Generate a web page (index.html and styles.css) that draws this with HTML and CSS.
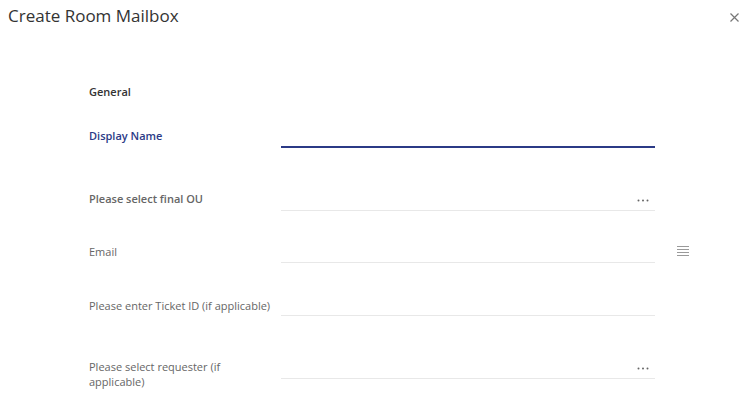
FILE: index.html
```html
<!DOCTYPE html>
<html lang="en">
<head>
    <meta charset="UTF-8">
    <title>Create Room Mailbox</title>
    <link rel="stylesheet" href="styles.css">
</head>
<body>
    <div class="dialog">
        <!-- header -->
        <div class="dialog-header">
            <h1 class="dialog-title">Create Room Mailbox</h1>
            <svg class="close-btn" width="9" height="9" viewBox="0 0 9 9">
                <path d="M0.5 0.5l8 8M8.5 0.5l-8 8" stroke="#777" stroke-width="1.2"/>
            </svg>
        </div>

        <div class="form">
            <div class="section-title">General</div>

            <div class="form-row row-active">
                <label class="form-label label-active">Display Name</label>
                <div class="field field-active"></div>
            </div>

            <div class="form-row row-ou">
                <label class="form-label label-bold">Please select final OU</label>
                <div class="field">
                    <svg class="more" width="12" height="3" viewBox="0 0 12 3">
                        <circle cx="1.5" cy="1.5" r="1" fill="#666"/>
                        <circle cx="6" cy="1.5" r="1" fill="#666"/>
                        <circle cx="10.5" cy="1.5" r="1" fill="#666"/>
                    </svg>
                </div>
            </div>

            <div class="form-row row-email">
                <label class="form-label">Email</label>
                <div class="field"></div>
                <svg class="list-icon" width="12" height="10" viewBox="0 0 12 10">
                    <path d="M0 0.5h12M0 3.5h12M0 6.5h12M0 9.5h12" stroke="#9a9a9a" stroke-width="1"/>
                </svg>
            </div>

            <div class="form-row row-ticket">
                <label class="form-label">Please enter Ticket ID (if applicable)</label>
                <div class="field"></div>
            </div>

            <div class="form-row row-requester">
                <label class="form-label">Please select requester (if applicable)</label>
                <div class="field">
                    <svg class="more" width="12" height="3" viewBox="0 0 12 3">
                        <circle cx="1.5" cy="1.5" r="1" fill="#666"/>
                        <circle cx="6" cy="1.5" r="1" fill="#666"/>
                        <circle cx="10.5" cy="1.5" r="1" fill="#666"/>
                    </svg>
                </div>
            </div>
        </div>
    </div>
</body>
</html>
```

FILE: styles.css
```css
* {
    margin: 0;
    padding: 0;
    box-sizing: border-box;
}

body {
    font-family: 'Open Sans', 'Noto Sans', Arial, sans-serif;
    background: #fff;
    color: #333;
    width: 740px;
    height: 410px;
    overflow: hidden;
}

.dialog-header {
    display: flex;
    justify-content: space-between;
    align-items: center;
    padding: 6px 0 0 8px;
    height: 24px;
}

.dialog-title {
    font-size: 17px;
    font-weight: 400;
    color: #333;
}

.close-btn {
    margin-right: 1px;
    margin-top: 5px;
}

.form {
    padding: 60px 0 0 89px;
}

.section-title {
    font-size: 11px;
    font-weight: 600;
    color: #333;
    height: 20px;
    line-height: 16px;
}

.form-row {
    display: flex;
    align-items: flex-end;
}

.form-label {
    width: 192px;
    flex: none;
    font-size: 11px;
    color: #666;
    line-height: 15px;
    padding-right: 8px;
}

.label-active {
    color: #2b3a86;
    font-weight: 600;
}

.label-bold {
    font-weight: 600;
}

.field {
    width: 374px;
    height: 20px;
    border-bottom: 1px solid #e8e8e8;
    display: flex;
    justify-content: flex-end;
    align-items: center;
}

.field-active {
    border-bottom: 2px solid #2b3a86;
}

.more {
    margin-right: 6px;
    margin-top: -1px;
}

.list-icon {
    margin-left: 22px;
    margin-bottom: 7px;
}

.row-active {
    margin-top: 24px;
    align-items: flex-start;
}

.row-ou {
    margin-top: 43px;
}

.row-ou .form-label {
    padding-bottom: 5px;
}

.row-email {
    margin-top: 32px;
}

.row-email .form-label {
    padding-bottom: 4px;
}

.row-ticket {
    margin-top: 33px;
}

.row-ticket .form-label {
    padding-bottom: 3px;
}

.row-requester {
    margin-top: 43px;
    align-items: flex-start;
}
```
